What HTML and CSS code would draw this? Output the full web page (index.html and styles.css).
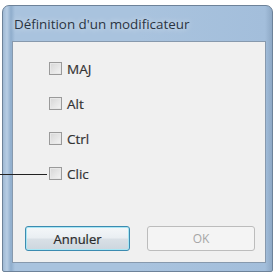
FILE: index.html
```html
<!DOCTYPE html>
<html>
<head>
<meta charset="utf-8">
<link rel="stylesheet" href="styles.css">
</head>
<body>
<div class="window">
  <div class="titlebar">Définition d'un modificateur</div>
  <div class="client">
    <div class="options">
      <label class="opt"><span class="box"></span><span>MAJ</span></label>
      <label class="opt"><span class="box"></span><span>Alt</span></label>
      <label class="opt"><span class="box"></span><span>Ctrl</span></label>
      <label class="opt"><span class="box"></span><span>Clic</span></label>
    </div>
    <div class="buttons">
      <button class="btn primary">Annuler</button>
      <button class="btn disabled">OK</button>
    </div>
  </div>
</div>
<div class="pointer"></div>
</body>
</html>
```
FILE: styles.css
```css
html, body {
  margin: 0;
  padding: 0;
  background: #ffffff;
  width: 276px;
  height: 273px;
  overflow: hidden;
  font-family: "Open Sans", "Noto Sans", sans-serif;
}
.window {
  margin: 5px 0 0 2px;
  width: 271px;
  height: 267px;
  box-sizing: border-box;
  border: 1px solid #6d8299;
  border-radius: 7px 7px 2px 2px;
  background: linear-gradient(90deg, #9fb9d4 0, #b7cde4 4px, #8fadcc 8px, #a9c3de 12px, #a9c3de 50%, #a3bedb calc(100% - 7px), #8ea9c6 100%);
  padding: 0 6px 8px 9px;
  display: flex;
  flex-direction: column;
}
.titlebar {
  height: 35px;
  box-sizing: border-box;
  padding: 10px 0 0 2px;
  font-size: 13.4px;
  color: #2a3442;
  line-height: 17px;
  text-shadow: 0 0 6px rgba(255,255,255,0.7);
}
.client {
  flex: 1;
  background: #f0f0f0;
  border: 1px solid #8799ad;
  display: flex;
  flex-direction: column;
}
.options {
  display: flex;
  flex-direction: column;
  gap: 22px;
  padding: 20px 0 0 36px;
}
.opt {
  display: flex;
  align-items: center;
  gap: 5px;
  height: 13px;
  font-size: 13.5px;
  color: #333;
  -webkit-text-stroke: 0.2px #333;
}
.box {
  width: 11px;
  height: 11px;
  border: 1px solid #9a9a9a;
  background: linear-gradient(135deg, #d6d6d6, #f4f4f4);
  box-shadow: inset 0 0 0 1px #e8e8e8;
}
.buttons {
  margin-top: auto;
  display: flex;
  justify-content: space-between;
  padding: 0 10px 11px 12px;
}
.btn {
  width: 105px;
  height: 25px;
  font-family: "Open Sans", "Noto Sans", sans-serif;
  font-size: 13px;
  border-radius: 3px;
  padding: 0;
}
.primary {
  border: 1px solid #3c8bb0;
  background: linear-gradient(#f4f7f9 0, #e9eef2 48%, #d9e0e6 52%, #cdd6de 100%);
  box-shadow: inset 0 0 0 1px #a8e6f4;
  color: #2a2a2a;
  -webkit-text-stroke: 0.2px #2a2a2a;
}
.disabled {
  width: 108px;
  border: 1px solid #bcbcbc;
  background: #f4f4f4;
  color: #a6a6a6;
  font-size: 12px;
}
.pointer {
  position: absolute;
  left: 0;
  top: 174px;
  width: 47px;
  height: 1px;
  background: #222;
}
```
